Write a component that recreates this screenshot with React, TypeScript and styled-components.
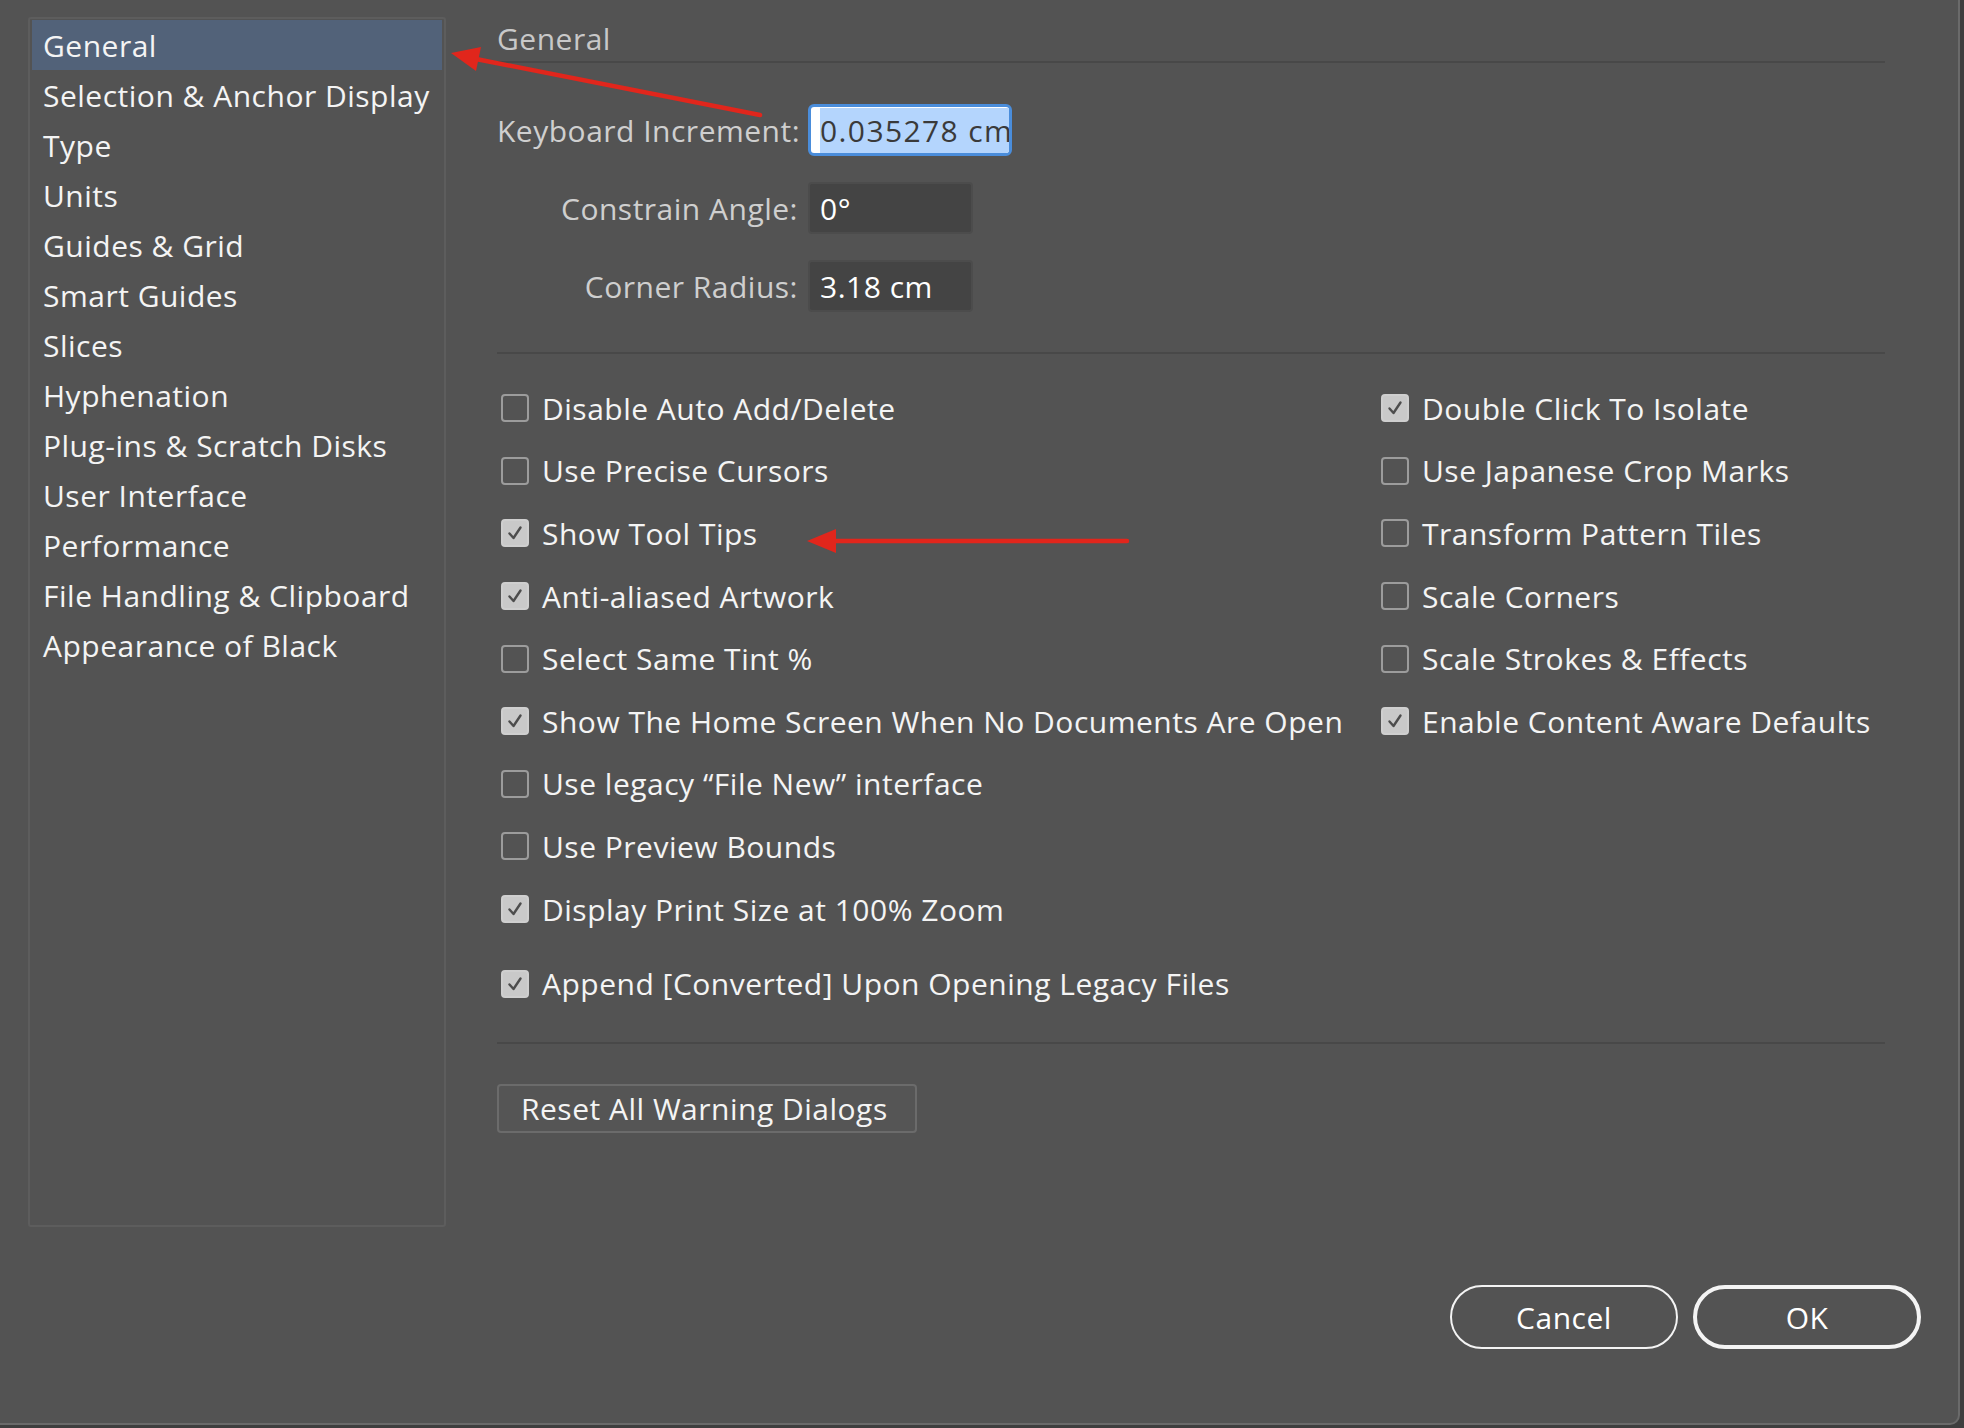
import React from 'react';
import styled, { createGlobalStyle } from 'styled-components';

const GlobalStyle = createGlobalStyle`
  html, body {
    margin: 0;
    padding: 0;
    background: #3e3e3e;
  }
  * {
    box-sizing: border-box;
  }
`;

const sidebarItems = [
  'General',
  'Selection & Anchor Display',
  'Type',
  'Units',
  'Guides & Grid',
  'Smart Guides',
  'Slices',
  'Hyphenation',
  'Plug-ins & Scratch Disks',
  'User Interface',
  'Performance',
  'File Handling & Clipboard',
  'Appearance of Black',
];

interface Option {
  label: string;
  checked: boolean;
  spaced?: boolean;
}

const leftOptions: Option[] = [
  { label: 'Disable Auto Add/Delete', checked: false },
  { label: 'Use Precise Cursors', checked: false },
  { label: 'Show Tool Tips', checked: true },
  { label: 'Anti-aliased Artwork', checked: true },
  { label: 'Select Same Tint %', checked: false },
  { label: 'Show The Home Screen When No Documents Are Open', checked: true },
  { label: 'Use legacy \u201CFile New\u201D interface', checked: false },
  { label: 'Use Preview Bounds', checked: false },
  { label: 'Display Print Size at 100% Zoom', checked: true },
  { label: 'Append [Converted] Upon Opening Legacy Files', checked: true, spaced: true },
];

const rightOptions: Option[] = [
  { label: 'Double Click To Isolate', checked: true },
  { label: 'Use Japanese Crop Marks', checked: false },
  { label: 'Transform Pattern Tiles', checked: false },
  { label: 'Scale Corners', checked: false },
  { label: 'Scale Strokes & Effects', checked: false },
  { label: 'Enable Content Aware Defaults', checked: true },
];

const Checkbox: React.FC<{ checked: boolean }> = ({ checked }) => (
  <Box $checked={checked}>
    {checked && (
      <svg width="18" height="18" viewBox="0 0 18 18">
        <path d="M3.5 9.5 L7.5 14 L14.5 3.5" fill="none" stroke="#4d4d4d" strokeWidth="2.4" strokeLinecap="round" strokeLinejoin="round" />
      </svg>
    )}
  </Box>
);

const App: React.FC = () => {
  return (
    <Screen>
      <GlobalStyle />
      <Window>
        <Body>
          <Sidebar>
            {sidebarItems.map((item, i) => (
              <SidebarItem key={item} $selected={i === 0}>{item}</SidebarItem>
            ))}
          </Sidebar>

          <Main>
            <Header>General</Header>

            <FieldGrid>
              <FieldLabel>Keyboard Increment:</FieldLabel>
              <Field $width={204} $focused>
                <Selected>0.035278 cm</Selected>
              </Field>
              <FieldLabel>Constrain Angle:</FieldLabel>
              <Field $width={165}>0°</Field>
              <FieldLabel>Corner Radius:</FieldLabel>
              <Field $width={165}>3.18 cm</Field>
            </FieldGrid>

            <Divider />

            <Columns>
              <OptionColumn $width={880}>
                {leftOptions.map((o) => (
                  <CheckRow key={o.label} $spaced={o.spaced}>
                    <Checkbox checked={o.checked} />
                    <CheckLabel>{o.label}</CheckLabel>
                  </CheckRow>
                ))}
              </OptionColumn>
              <OptionColumn>
                {rightOptions.map((o) => (
                  <CheckRow key={o.label}>
                    <Checkbox checked={o.checked} />
                    <CheckLabel>{o.label}</CheckLabel>
                  </CheckRow>
                ))}
              </OptionColumn>
            </Columns>

            <Divider $gap={27} />

            <ResetButton>Reset All Warning Dialogs</ResetButton>
          </Main>
        </Body>

        <Footer>
          <PillButton>Cancel</PillButton>
          <PillButton $primary>OK</PillButton>
        </Footer>
      </Window>

      {/* red annotation arrows */}
      <Annotations width="1964" height="1428" viewBox="0 0 1964 1428">
        <line x1="760" y1="115" x2="476" y2="59" stroke="#e1261c" strokeWidth="4.5" strokeLinecap="round" />
        <polygon points="451,53 481,47 476,71" fill="#e1261c" />
        <line x1="1127" y1="541" x2="832" y2="541" stroke="#e1261c" strokeWidth="4.5" strokeLinecap="round" />
        <polygon points="807,541 836,529 836,553" fill="#e1261c" />
      </Annotations>
    </Screen>
  );
};

const Screen = styled.div`
  position: relative;
  width: 1964px;
  height: 1428px;
  overflow: hidden;
  font-family: 'Open Sans', 'Liberation Sans', sans-serif;
  font-weight: 500;
  letter-spacing: 0.5px;
`;

const Window = styled.div`
  width: 1960px;
  height: 1425px;
  background: #535353;
  border-right: 2px solid #6a6a6a;
  border-bottom: 2px solid #6a6a6a;
  border-bottom-right-radius: 10px;
  padding: 17px 37px 74px 28px;
  display: flex;
  flex-direction: column;
`;

const Body = styled.div`
  display: flex;
  gap: 51px;
`;

const Sidebar = styled.div`
  width: 418px;
  height: 1210px;
  border: 2px solid #5d5d5d;
  border-radius: 3px;
  padding: 1px 2px;
  display: flex;
  flex-direction: column;
`;

const SidebarItem = styled.div<{ $selected?: boolean }>`
  height: 50px;
  display: flex;
  align-items: center;
  padding-left: 11px;
  font-size: 30px;
  color: #f4f4f4;
  white-space: nowrap;
  background: ${(p) => (p.$selected ? '#526279' : 'transparent')};
`;

const Main = styled.div`
  width: 1388px;
  display: flex;
  flex-direction: column;
`;

const Header = styled.div`
  height: 46px;
  line-height: 44px;
  font-size: 30px;
  color: #c8c8c8;
  border-bottom: 2px solid #484848;
`;

const FieldGrid = styled.div`
  margin-top: 41px;
  display: grid;
  grid-template-columns: 301px auto;
  column-gap: 10px;
  row-gap: 26px;
  align-items: center;
`;

const FieldLabel = styled.div`
  text-align: right;
  font-size: 30px;
  color: #cfcfcf;
  white-space: nowrap;
`;

const Field = styled.div<{ $width: number; $focused?: boolean }>`
  width: ${(p) => p.$width}px;
  height: 52px;
  display: flex;
  align-items: center;
  overflow: hidden;
  white-space: nowrap;
  font-size: 30px;
  padding: ${(p) => (p.$focused ? '0 6px 0 9px' : '0 10px')};
  letter-spacing: ${(p) => (p.$focused ? '1.4px' : '0.5px')};
  border-radius: ${(p) => (p.$focused ? '6px' : '4px')};
  background: ${(p) => (p.$focused ? '#ffffff' : '#444444')};
  border: ${(p) => (p.$focused ? '3px solid #4a8ddb' : '2px solid #4c4c4c')};
  color: ${(p) => (p.$focused ? '#3a3a3a' : '#ffffff')};
`;

const Selected = styled.span`
  background: #b4d5fd;
  padding: 2px 0;
`;

const Divider = styled.div<{ $gap?: number }>`
  height: 2px;
  background: #484848;
  margin-top: ${(p) => p.$gap ?? 40}px;
`;

const Columns = styled.div`
  display: flex;
  margin-top: 23px;
`;

const OptionColumn = styled.div<{ $width?: number }>`
  display: flex;
  flex-direction: column;
  width: ${(p) => (p.$width ? `${p.$width}px` : 'auto')};
`;

const CheckRow = styled.div<{ $spaced?: boolean }>`
  height: 62.6px;
  display: flex;
  align-items: center;
  gap: 13px;
  padding-left: 4px;
  margin-top: ${(p) => (p.$spaced ? '12px' : '0')};
`;

const Box = styled.div<{ $checked: boolean }>`
  width: 28px;
  height: 28px;
  flex-shrink: 0;
  border-radius: 4px;
  display: flex;
  align-items: center;
  justify-content: center;
  border: 2px solid ${(p) => (p.$checked ? '#cfcfcf' : '#9c9c9c')};
  background: ${(p) => (p.$checked ? '#c9c9c9' : 'transparent')};
`;

const CheckLabel = styled.span`
  font-size: 30px;
  color: #f4f4f4;
  white-space: nowrap;
`;

const ResetButton = styled.div`
  margin-top: 40px;
  width: 420px;
  height: 49px;
  display: flex;
  align-items: center;
  padding-left: 22px;
  border: 2px solid #6b6b6b;
  border-radius: 4px;
  background: #555555;
  font-size: 30px;
  color: #f4f4f4;
  white-space: nowrap;
`;

const Footer = styled.div`
  margin-top: auto;
  display: flex;
  justify-content: flex-end;
  gap: 15px;
`;

const PillButton = styled.div<{ $primary?: boolean }>`
  width: 228px;
  height: 64px;
  border-radius: 32px;
  display: flex;
  align-items: center;
  justify-content: center;
  border: ${(p) => (p.$primary ? '4px' : '2px')} solid #f4f4f4;
  font-size: 30px;
  color: #ffffff;
`;

const Annotations = styled.svg`
  position: absolute;
  top: 0;
  left: 0;
  pointer-events: none;
`;

export default App;
